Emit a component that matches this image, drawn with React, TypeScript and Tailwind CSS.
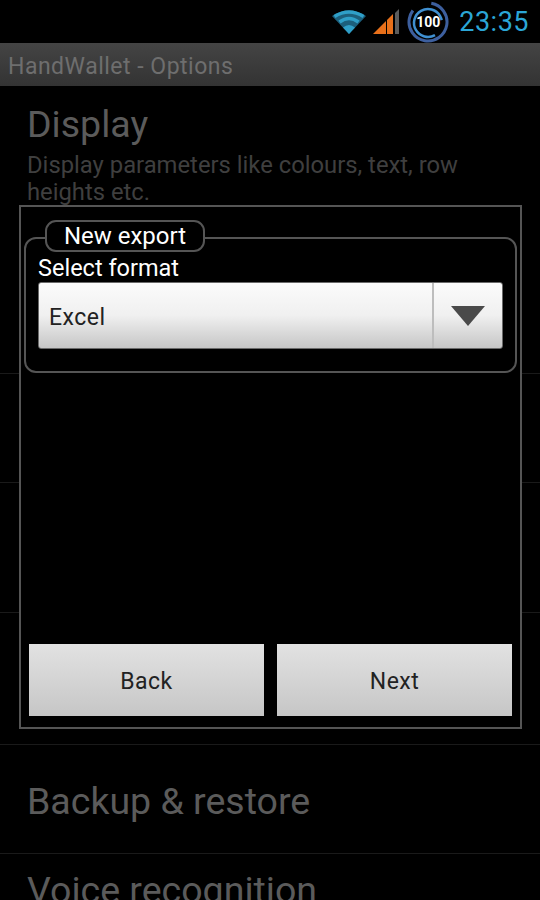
const font = "font-['Roboto',_'Noto_Sans',_sans-serif]";

function Wifi() {
  return (
    <svg width="36" height="28" viewBox="0 0 36 28">
      <path d="M18 26 L1 8 Q18 -3 35 8 Z" fill="#1c5f7c" />
      <path d="M3.5 8.5 Q18 -0.5 32.5 8.5" fill="none" stroke="#2f9fc8" strokeWidth="3.5" />
      <path d="M8.5 14 Q18 7 27.500 14" fill="none" stroke="#2f9fc8" strokeWidth="3.5" />
      <path d="M18 26 L12 19.500 Q18 14.500 24 19.500 Z" fill="#2f9fc8" />
    </svg>
  );
}

function Signal() {
  return (
    <svg width="28" height="27" viewBox="0 0 28 27">
      <path d="M0 26 L7 19 V26 Z" fill="#e8701a" />
      <path d="M7 19 L13 13 V26 H7 Z" fill="#e8701a" />
      <path d="M14 12 L20 6 V26 H14 Z" fill="#e8701a" />
      <path d="M22 5 L26 1 V26 H22 Z" fill="#5c5c5c" />
    </svg>
  );
}

function Battery() {
  return (
    <div className="relative w-[42px] h-[42px]">
      <svg width="42" height="42" viewBox="0 0 42 42" className="absolute inset-0">
        <circle cx="21" cy="21" r="19" fill="none" stroke="#3d5f9e" strokeWidth="3" strokeDasharray="98 22" transform="rotate(-80 21 21)" />
        <circle cx="21" cy="22" r="14" fill="none" stroke="#3f8fd0" strokeWidth="2.5" strokeDasharray="70 18" transform="rotate(60 21 22)" />
      </svg>
      <span className="absolute inset-0 flex items-center justify-center text-[14px] font-bold text-white leading-none">100</span>
    </div>
  );
}

function Row({ title, sub, className }: { title: string; sub?: string; className: string }) {
  return (
    <div className={`border-b border-[#1a1a1a] px-[27px] ${className}`}>
      <div className="text-[37.5px] leading-[40px] text-[#5b5b5b]">{title}</div>
      {sub && <div className="text-[23.8px] leading-[27px] text-[#3f3f3f] mt-[8px]">{sub}</div>}
    </div>
  );
}

function Btn({ label }: { label: string }) {
  return (
    <button className="flex-1 h-[72px] pt-[5px] bg-gradient-to-b from-[#e2e2e2] to-[#c6c6c6] text-[23px] tracking-[0.5px] text-[#222]">
      {label}
    </button>
  );
}

export default function App() {
  return (
    <div className={`relative w-[540px] h-[900px] overflow-hidden bg-black ${font}`}>
      <div className="h-[43px] flex items-center justify-end gap-[6px] pr-[11px]">
        <Wifi />
        <Signal />
        <Battery />
        <span className="text-[27px] text-[#2ba6d6] ml-[4px] tracking-[0.5px] pt-[1px]">23:35</span>
      </div>
      <div className="h-[43px] bg-gradient-to-b from-[#444444] to-[#333333] flex items-center px-[8px] pt-[6px] text-[23px] tracking-[0.5px] text-[#6e6e6e]">
        HandWallet - Options
      </div>
      <Row
        className="pt-[18px] h-[288px]"
        title="Display"
        sub="Display parameters like colours, text, row heights etc."
      />
      <Row className="h-[109px]" title="" />
      <Row className="h-[130px]" title="" />
      <Row className="h-[132px]" title="" />
      <Row className="h-[109px] pt-[36px]" title="Backup & restore" />
      <Row className="pt-[16px]" title="Voice recognition" />

      <div className="absolute left-[19px] top-[205px] w-[503px] h-[524px] border-2 border-[#555] bg-black flex flex-col px-[3px] pb-[11px]">
        <div className="relative mt-[30px] h-[136px] w-[493px] border-2 border-[#555] rounded-[12px] px-[12px] pt-[15px]">
          <div className="absolute left-[19px] -top-[19px] h-[32px] w-[160px] bg-black border-2 border-[#555] rounded-[11px] flex items-center justify-center text-[24px] text-white">
            New export
          </div>
          <div className="text-[23.5px] leading-[28px] text-white">Select format</div>
          <div className="flex h-[67px] w-[465px] rounded-[3px] overflow-hidden border border-[#6a6a6a] bg-gradient-to-b from-[#fbfbfb] via-[#f0f0f0] to-[#c6c6c6]">
            <div className="flex-1 flex items-center pl-[10px] pt-[6px] text-[23px] tracking-[0.5px] text-[#222]">Excel</div>
            <div className="w-[70px] flex items-center justify-center border-l-2 border-[#bdbdbd]">
              <svg width="36" height="22" viewBox="0 0 36 22" className="mr-[1px]">
                <path d="M1 1 H35 L18 21 Z" fill="#4a4a4a" />
              </svg>
            </div>
          </div>
        </div>
        <div className="flex-1" />
        <div className="flex gap-[13px] mx-[5px]">
          <Btn label="Back" />
          <Btn label="Next" />
        </div>
      </div>
    </div>
  );
}
